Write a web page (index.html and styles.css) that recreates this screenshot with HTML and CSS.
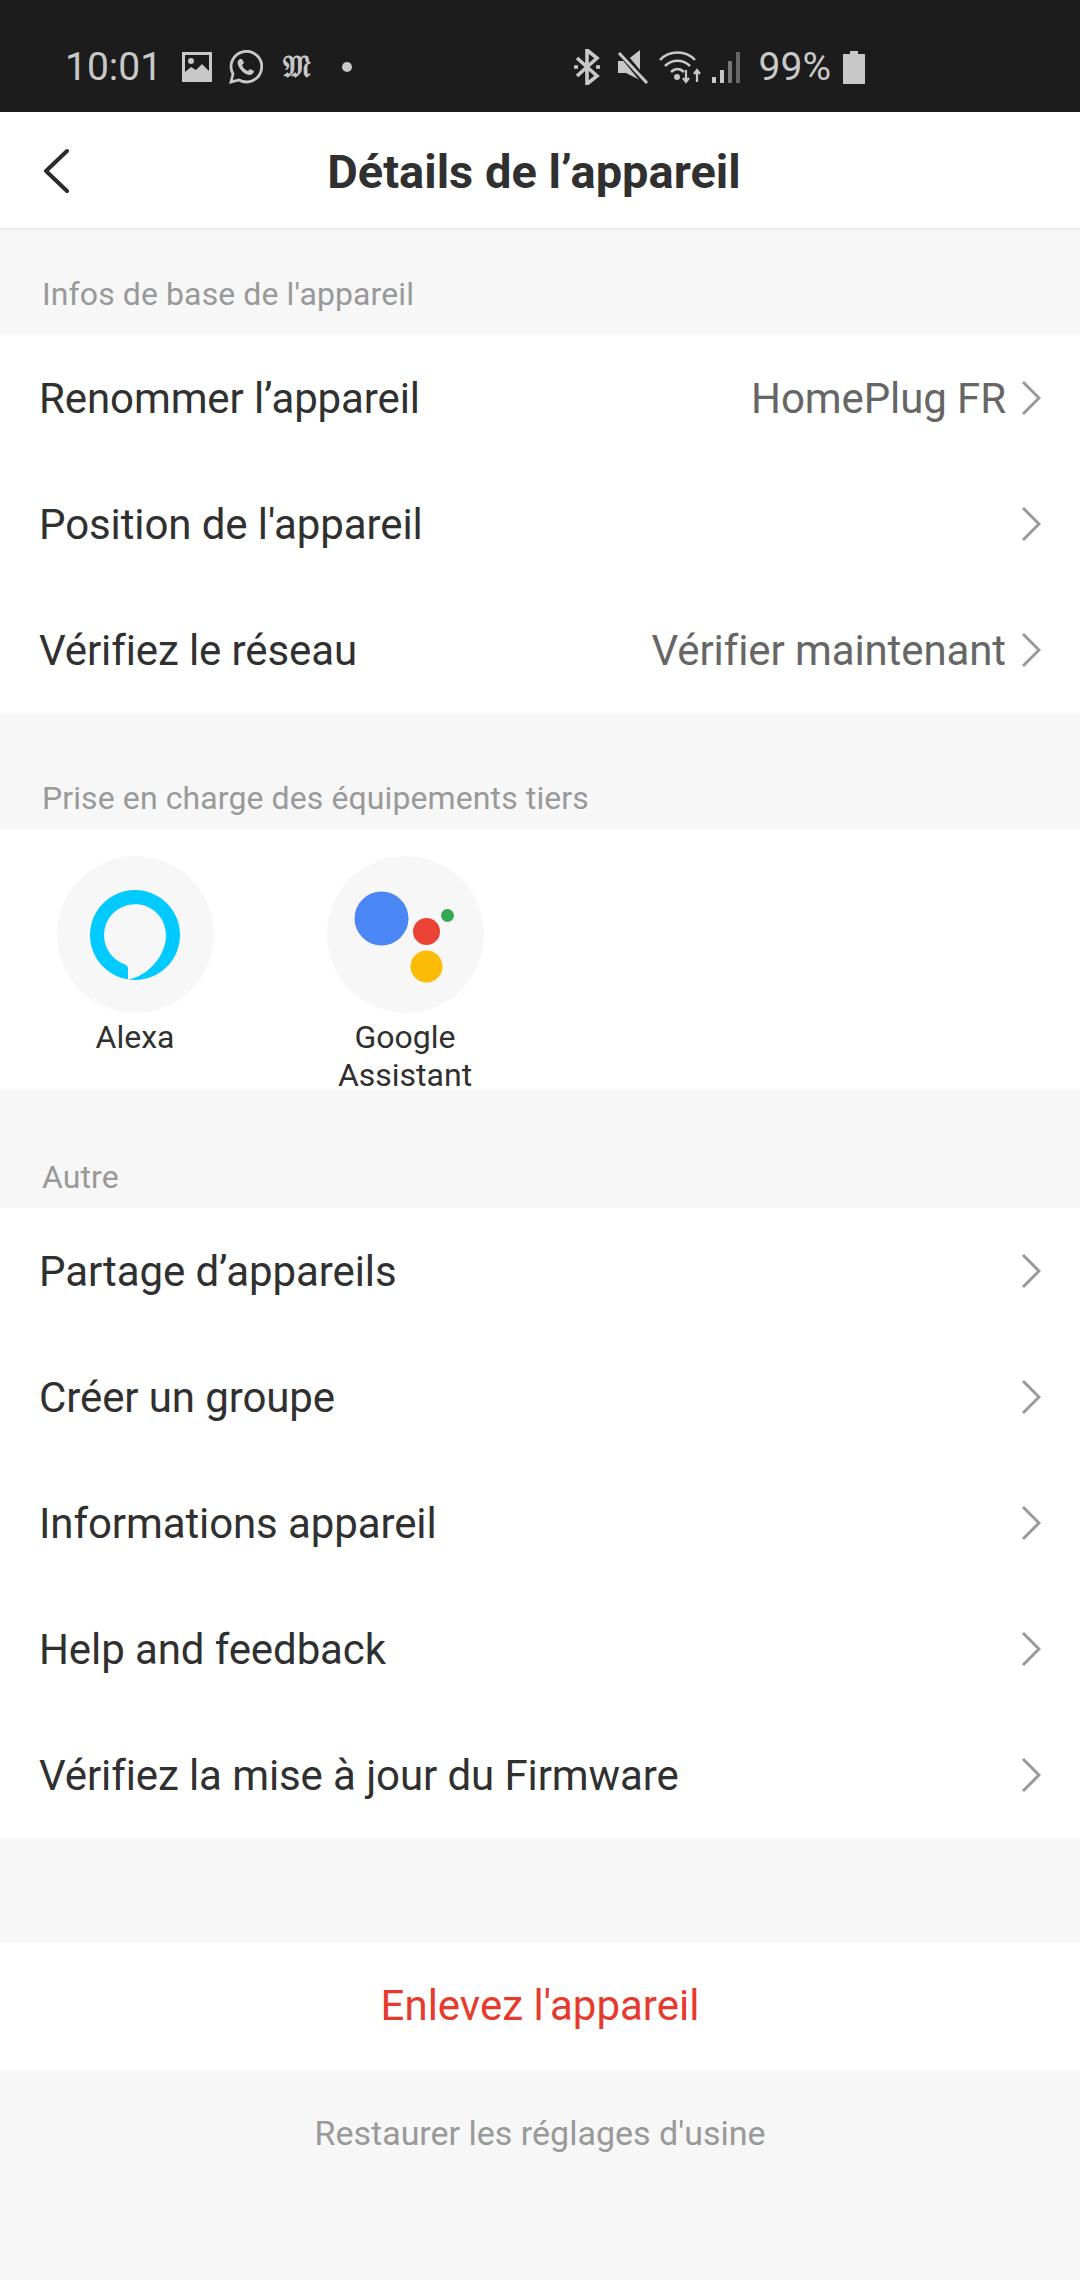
FILE: index.html
```html
<!DOCTYPE html>
<html>
<head>
    <title>Détails de l’appareil</title>
    <link rel="stylesheet" href="styles.css">
</head>
<body>

<div class="status-bar">
    <div class="status-left">
        <span class="time">10:01</span>
        <svg class="st-image" width="30" height="30" viewBox="0 0 30 30"><path fill="#c8c8c8" fill-rule="evenodd" d="M0 0h30v30H0zM3 3v17l6-5 5 3 6-6 7 7V3z"/><circle cx="9" cy="9" r="3" fill="#c8c8c8"/></svg>
        <svg class="st-whatsapp" width="35" height="35" viewBox="0 0 35 35"><path fill="none" stroke="#c8c8c8" stroke-width="2.8" d="M3 32l2-8A15.300 15.300 0 1 1 11 30z"/><path fill="#c8c8c8" d="M12 9c-2 1-3 3-2 6 2 5 6 9 11 10 3 0 5-2 5-4l-4-2-2 2c-3-1-5-3-6-6l2-2-2-4z"/></svg>
        <span class="st-paper">𝔐</span>
        <span class="st-dot"></span>
    </div>
    <div class="status-right">
        <svg class="st-bluetooth" width="32" height="36" viewBox="0 0 32 36"><path fill="none" stroke="#c8c8c8" stroke-width="3.600" d="M6 9l20 18-10 8V1l10 8L6 27"/><path stroke="#c8c8c8" stroke-width="3.600" d="M3 18h4M25 18h4"/></svg>
        <svg width="32" height="34" viewBox="0 0 32 34"><path fill="#c8c8c8" d="M1 11h8L23 0v30L9 23H1z"/><path stroke="#1c1c1c" stroke-width="7" d="M5 4l26 31"/><path stroke="#c8c8c8" stroke-width="3" d="M2 3l28 30"/></svg>
        <svg width="42" height="34" viewBox="0 0 42 34"><g fill="none" stroke="#c8c8c8" stroke-width="2.600"><path d="M1 10C10 0 27 0 36 10"/><path d="M6 16c7-7 18-7 25 0"/><path d="M12 22c4-4 9-4 13 0"/></g><circle cx="18" cy="27" r="3" fill="#c8c8c8"/><path fill="none" stroke="#c8c8c8" stroke-width="2.200" d="M27 20v12M24 28l3 4 3-4M38 32V20M35 24l3-4 3 4"/></svg>
        <svg width="30" height="34" viewBox="0 0 30 34"><rect x="1" y="27" width="4" height="6" fill="#c8c8c8"/><rect x="9" y="20" width="4" height="13" fill="#c8c8c8"/><rect x="17" y="11" width="4" height="22" fill="#777"/><rect x="25" y="2" width="4" height="31" fill="#666"/></svg>
        <span class="battery-text">99%</span>
        <svg width="22" height="33" viewBox="0 0 22 33"><path fill="#c8c8c8" d="M7 0h8v3h7v30H0V3h7z"/></svg>
    </div>
</div>

<div class="header">
    <svg class="back" width="30" height="46" viewBox="0 0 30 46"><path fill="none" stroke="#2b2b2b" stroke-width="4" stroke-linecap="round" stroke-linejoin="round" d="M26 3L5 23l21 20"/></svg>
    <h1>Détails de l’appareil</h1>
</div>

<div class="section-label label-first">Infos de base de l'appareil</div>
<div class="group">
    <div class="row">
        <span class="row-name">Renommer l’appareil</span>
        <span class="row-value">HomePlug FR</span>
        <svg class="chevron" width="20" height="36" viewBox="0 0 20 36"><path d="M2 2l16 16L2 34"/></svg>
    </div>
    <div class="row">
        <span class="row-name">Position de l'appareil</span>
        <svg class="chevron" width="20" height="36" viewBox="0 0 20 36"><path d="M2 2l16 16L2 34"/></svg>
    </div>
    <div class="row">
        <span class="row-name">Vérifiez le réseau</span>
        <span class="row-value">Vérifier maintenant</span>
        <svg class="chevron" width="20" height="36" viewBox="0 0 20 36"><path d="M2 2l16 16L2 34"/></svg>
    </div>
</div>

<div class="section-label">Prise en charge des équipements tiers</div>
<div class="group third-party">
    <div class="tp-item">
        <div class="tp-circle">
            <svg width="90" height="90" viewBox="0 0 90 90"><path fill="#00caff" fill-rule="evenodd" d="M45 0a45 45 0 1 1 0 90a45 45 0 1 1 0-90zM38 89.600V78q0-2-3-3.500A31 31 0 1 1 76 45C76 66 58 86 38 89.600z"/></svg>
        </div>
        <div class="tp-name">Alexa</div>
    </div>
    <div class="tp-item">
        <div class="tp-circle">
            <svg width="157" height="157" viewBox="0 0 157 157"><circle cx="54.500" cy="62.500" r="27" fill="#4a86f4"/><circle cx="99.500" cy="75.500" r="13.500" fill="#ea4335"/><circle cx="120.500" cy="59.500" r="6.500" fill="#34a853"/><circle cx="99.500" cy="110.500" r="16" fill="#fbbc05"/></svg>
        </div>
        <div class="tp-name">Google Assistant</div>
    </div>
</div>

<div class="section-label label-low">Autre</div>
<div class="group">
    <div class="row">
        <span class="row-name">Partage d’appareils</span>
        <svg class="chevron" width="20" height="36" viewBox="0 0 20 36"><path d="M2 2l16 16L2 34"/></svg>
    </div>
    <div class="row">
        <span class="row-name">Créer un groupe</span>
        <svg class="chevron" width="20" height="36" viewBox="0 0 20 36"><path d="M2 2l16 16L2 34"/></svg>
    </div>
    <div class="row">
        <span class="row-name">Informations appareil</span>
        <svg class="chevron" width="20" height="36" viewBox="0 0 20 36"><path d="M2 2l16 16L2 34"/></svg>
    </div>
    <div class="row">
        <span class="row-name">Help and feedback</span>
        <svg class="chevron" width="20" height="36" viewBox="0 0 20 36"><path d="M2 2l16 16L2 34"/></svg>
    </div>
    <div class="row">
        <span class="row-name">Vérifiez la mise à jour du Firmware</span>
        <svg class="chevron" width="20" height="36" viewBox="0 0 20 36"><path d="M2 2l16 16L2 34"/></svg>
    </div>
</div>

<div class="remove-button">Enlevez l'appareil</div>
<div class="restore-link">Restaurer les réglages d'usine</div>

</body>
</html>
```

FILE: styles.css
```css
body {
    margin: 0;
    height: 2280px;
    overflow: hidden;
    background-color: #f7f7f7;
    font-family: Roboto, sans-serif;
    color: #303030;
}

/* Status bar */
.status-bar {
    height: 112px;
    box-sizing: border-box;
    padding: 50px 215px 0 65px;
    background-color: #1c1c1c;
    color: #c8c8c8;
    display: flex;
    justify-content: space-between;
    align-items: flex-start;
}

.status-left,
.status-right {
    display: flex;
    align-items: center;
    height: 34px;
}

.time {
    font-size: 39px;
    width: 117px;
}

.st-image {
    margin-right: 16px;
}

.st-paper {
    width: 30px;
    margin-left: 20px;
    font-family: "DejaVu Sans", "Liberation Serif", serif;
    font-size: 30px;
    font-weight: 700;
    line-height: 34px;
}

.st-dot {
    width: 10px;
    height: 10px;
    margin-left: 29px;
    border-radius: 50%;
    background-color: #c8c8c8;
}

.status-right {
    gap: 10px;
}

.st-bluetooth {
    margin-right: 4px;
}

.battery-text {
    font-size: 39px;
    margin: 0 2px 0 8px;
}

/* Header */
.header {
    height: 116px;
    background-color: #fff;
    border-bottom: 2px solid #ebebeb;
    display: flex;
    align-items: center;
    justify-content: center;
    position: relative;
}

.header h1 {
    margin: 0 12px 0 0;
    padding-top: 2px;
    font-size: 47px;
    font-weight: 700;
}

.back {
    position: absolute;
    left: 41px;
    top: 36px;
}

/* Groups */
.section-label {
    height: 76px;
    padding: 30px 0 0 42px;
    box-sizing: border-box;
    font-size: 32px;
    line-height: 40px;
    letter-spacing: 0.1px;
    color: #999;
}

.label-first {
    height: 105px;
    padding-top: 44px;
}

.group {
    background-color: #fff;
}

.group + .section-label {
    height: 116px;
    padding-top: 65px;
}

.group + .label-low {
    height: 119px;
    padding-top: 68px;
}

.row {
    height: 126px;
    padding: 0 39px 0 39px;
    display: flex;
    align-items: center;
    font-size: 42px;
    letter-spacing: -0.1px;
}

.row-name {
    flex: 1;
}

.row-value {
    color: #666;
    margin-right: 15px;
}

.chevron {
    fill: none;
    stroke: #999;
    stroke-width: 3;
}

/* Alexa, Google Assistant */
.third-party {
    height: 260px;
    box-sizing: border-box;
    padding-top: 27px;
    display: flex;
}

.tp-item {
    width: 270px;
    display: flex;
    flex-direction: column;
    align-items: center;
}

.tp-circle {
    flex: none;
    width: 157px;
    height: 157px;
    border-radius: 50%;
    background-color: #f7f7f7;
    display: flex;
    align-items: center;
    justify-content: center;
}

.tp-name {
    width: 170px;
    margin-top: 5px;
    font-size: 32px;
    line-height: 38px;
    text-align: center;
}

/* Bottom actions */
.remove-button {
    height: 128px;
    margin-top: 104px;
    background-color: #fff;
    color: #e63a2e;
    font-size: 42px;
    line-height: 128px;
    text-align: center;
}

.restore-link {
    margin-top: 43px;
    font-size: 34px;
    line-height: 40px;
    color: #999;
    text-align: center;
}
```
